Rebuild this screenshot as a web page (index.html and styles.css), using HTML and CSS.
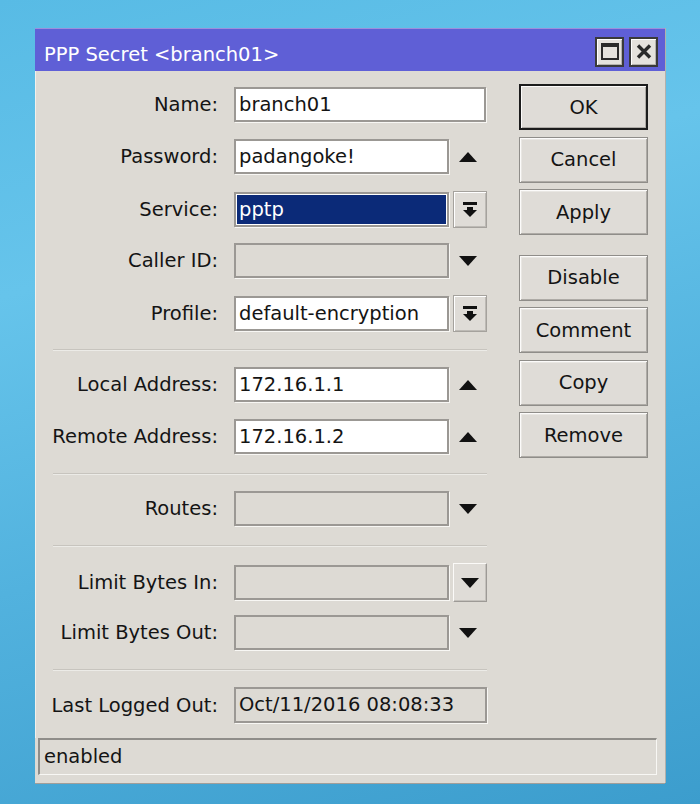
FILE: index.html
```html
<!DOCTYPE html>
<html>
<head>
<meta charset="utf-8">
<title>PPP Secret</title>
<link rel="stylesheet" href="styles.css">
</head>
<body>
<div class="window">
  <div class="titlebar">
    <span class="title">PPP Secret &lt;branch01&gt;</span>
    <div class="tb-buttons">
      <span class="tb-btn">
        <svg width="18" height="17" viewBox="0 0 18 17"><rect x="1" y="1" width="16" height="15" fill="none" stroke="#2a2a2a" stroke-width="2"/><rect x="0" y="0" width="18" height="4" fill="#2a2a2a"/></svg>
      </span>
      <span class="tb-btn">
        <svg width="16" height="15" viewBox="0 0 16 15"><path d="M2 1.5L14 13.5M14 1.5L2 13.5" stroke="#2a2a2a" stroke-width="3.4" fill="none"/></svg>
      </span>
    </div>
  </div>

  <div class="body">
    <div class="form">
      <div class="row">
        <span class="lbl">Name:</span>
        <div class="field wide">branch01</div>
      </div>
      <div class="row">
        <span class="lbl">Password:</span>
        <div class="field">padangoke!</div>
        <span class="arrow"><svg width="18" height="10" viewBox="0 0 18 10"><path d="M9 0L18 10H0z" fill="#111"/></svg></span>
      </div>
      <div class="row">
        <span class="lbl">Service:</span>
        <div class="field selected"><span class="sel">pptp</span></div>
        <span class="dd"><svg width="14" height="16" viewBox="0 0 14 16"><rect x="0" y="0" width="14" height="3" fill="#111"/><rect x="4" y="5" width="6" height="4" fill="#111"/><path d="M0 8H14L7 15z" fill="#111"/></svg></span>
      </div>
      <div class="row">
        <span class="lbl">Caller ID:</span>
        <div class="field off"></div>
        <span class="arrow"><svg width="18" height="10" viewBox="0 0 18 10"><path d="M0 0H18L9 10z" fill="#111"/></svg></span>
      </div>
      <div class="row">
        <span class="lbl">Profile:</span>
        <div class="field">default-encryption</div>
        <span class="dd"><svg width="14" height="16" viewBox="0 0 14 16"><rect x="0" y="0" width="14" height="3" fill="#111"/><rect x="4" y="5" width="6" height="4" fill="#111"/><path d="M0 8H14L7 15z" fill="#111"/></svg></span>
      </div>

      <div class="sep"></div>

      <div class="row">
        <span class="lbl">Local Address:</span>
        <div class="field">172.16.1.1</div>
        <span class="arrow"><svg width="18" height="10" viewBox="0 0 18 10"><path d="M9 0L18 10H0z" fill="#111"/></svg></span>
      </div>
      <div class="row">
        <span class="lbl">Remote Address:</span>
        <div class="field">172.16.1.2</div>
        <span class="arrow"><svg width="18" height="10" viewBox="0 0 18 10"><path d="M9 0L18 10H0z" fill="#111"/></svg></span>
      </div>

      <div class="sep"></div>

      <div class="row">
        <span class="lbl">Routes:</span>
        <div class="field off"></div>
        <span class="arrow"><svg width="18" height="10" viewBox="0 0 18 10"><path d="M0 0H18L9 10z" fill="#111"/></svg></span>
      </div>

      <div class="sep"></div>

      <div class="row">
        <span class="lbl">Limit Bytes In:</span>
        <div class="field off"></div>
        <span class="dd raised"><svg width="18" height="10" viewBox="0 0 18 10"><path d="M0 0H18L9 10z" fill="#111"/></svg></span>
      </div>
      <div class="row">
        <span class="lbl">Limit Bytes Out:</span>
        <div class="field off"></div>
        <span class="arrow"><svg width="18" height="10" viewBox="0 0 18 10"><path d="M0 0H18L9 10z" fill="#111"/></svg></span>
      </div>

      <div class="sep"></div>

      <div class="row last">
        <span class="lbl">Last Logged Out:</span>
        <div class="field off wide">Oct/11/2016 08:08:33</div>
      </div>
    </div>

    <div class="actions">
      <button class="btn default">OK</button>
      <button class="btn">Cancel</button>
      <button class="btn">Apply</button>
      <button class="btn group">Disable</button>
      <button class="btn">Comment</button>
      <button class="btn">Copy</button>
      <button class="btn">Remove</button>
    </div>
  </div>

  <div class="status">enabled</div>
</div>
</body>
</html>
```
FILE: styles.css
```css
* {
  box-sizing: border-box;
}

html,
body {
  margin: 0;
}

body {
  width: 700px;
  height: 804px;
  overflow: hidden;
  padding: 28px 0 0 35px;
  background: linear-gradient(165deg, #58bbe5 0%, #66c4eb 30%, #52b2de 60%, #3c9dcd 100%);
  font-family: "DejaVu Sans", "Noto Sans", sans-serif;
  font-size: 19.5px;
  color: #141414;
}

/* dialog frame */
.window {
  width: 630px;
  height: 755px;
  display: flex;
  flex-direction: column;
  background: #dddad4;
  box-shadow: 1px 0 0 #b3b0ab, 0 1px 0 #a09e9a;
}

.titlebar {
  flex: none;
  height: 43px;
  display: flex;
  align-items: center;
  padding: 0 7px 0 9px;
  background: #5f5fd6;
  border-top: 1px solid #9b90dc;
  color: #fff;
}

.title {
  flex: 1;
  padding-top: 8px;
  white-space: nowrap;
}

.tb-buttons {
  display: flex;
  gap: 5px;
  margin-top: 3px;
}

.tb-btn {
  width: 29px;
  height: 30px;
  display: flex;
  align-items: center;
  justify-content: center;
  background: #e5e2dd;
  border: 2px solid #3a3a3a;
  box-shadow: inset 1px 1px 0 #fff, inset -1px -1px 0 #b5b2ad;
}

/* content */
.body {
  flex: 1;
  display: flex;
  gap: 32px;
  padding-top: 16px;
  border-left: 1px solid #f2f0ec;
}

.form {
  width: 451px;
}

.row {
  display: grid;
  grid-template-columns: 198px 215px 38px;
  height: 35px;
  align-items: center;
}

.row + .row {
  margin-top: 17px;
}

.row.last {
  height: 36px;
}

.lbl {
  text-align: right;
  padding-right: 16px;
  white-space: nowrap;
}

.field {
  height: 35px;
  border: 2px solid #9b9894;
  background: #fff;
  padding-left: 3px;
  line-height: 31px;
  white-space: nowrap;
  overflow: hidden;
  box-shadow: 1px 1px 0 #f8f7f4;
}

.field.off {
  background: #dddad4;
}

.field.wide {
  grid-column: 2 / 4;
  width: 252px;
}

.row.last .field {
  height: 36px;
  width: 253px;
  line-height: 32px;
}

.field.selected {
  padding: 1px;
}

.sel {
  display: block;
  height: 100%;
  padding-left: 2px;
  line-height: 29px;
  background: #0b2a78;
  color: #fff;
}

.arrow {
  display: flex;
  align-items: center;
  justify-content: center;
  height: 35px;
}

.dd {
  justify-self: start;
  width: 34px;
  height: 37px;
  margin-left: 4px;
  display: flex;
  align-items: center;
  justify-content: center;
  background: #dfdcd7;
  border: 1px solid #a5a29d;
  box-shadow: inset 1px 1px 0 #fff, inset -1px -1px 0 #bdbab5;
}

.dd.raised {
  height: 39px;
  border-color: #fbfaf8 #9d9a96 #9d9a96 #fbfaf8;
  box-shadow: inset -1px -1px 0 #c4c1bc;
}

.sep {
  height: 2px;
  margin: 19px 0 16px 17px;
  border-top: 1px solid #c7c4be;
  border-bottom: 1px solid #ecebe7;
}

/* command buttons */
.actions {
  width: 129px;
  display: flex;
  flex-direction: column;
  gap: 6.5px;
  margin-top: -3px;
}

.btn {
  height: 46px;
  padding: 0;
  font: inherit;
  color: #141414;
  background: #dfdcd7;
  border: 1px solid #8f8d89;
  box-shadow: inset 1px 1px 0 #fcfbfa, inset -1px -1px 0 #aeaba6, inset 2px 2px 0 #e9e7e3;
}

.btn.default {
  border: 2px solid #1c1c1c;
  box-shadow: inset 1px 1px 0 #fcfbfa, inset -1px -1px 0 #aeaba6;
}

.btn.group {
  margin-top: 13px;
}

/* status line */
.status {
  flex: none;
  height: 37px;
  margin: 0 8px 8px 3px;
  padding-left: 4px;
  line-height: 34px;
  border-style: solid;
  border-width: 2px 1px 1px 2px;
  border-color: #8f8d89 #f8f7f4 #f8f7f4 #8f8d89;
}
```
